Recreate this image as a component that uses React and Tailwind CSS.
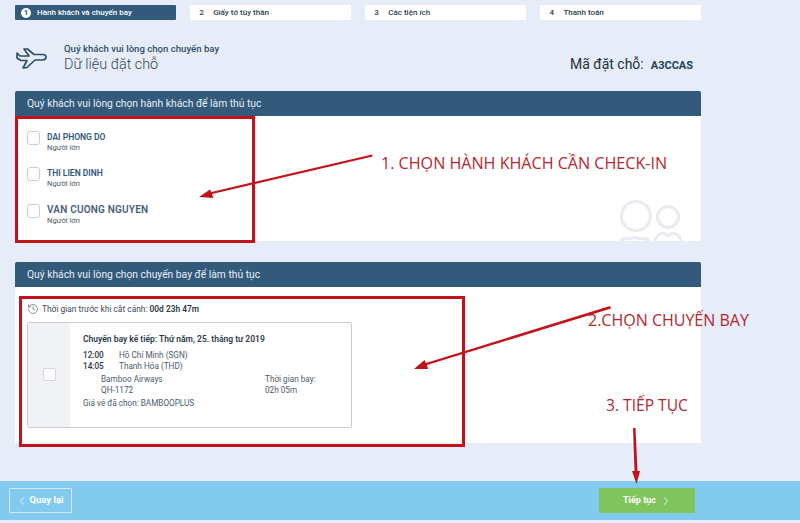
import React from "react";
import { ChevronLeft, ChevronRight, History } from "lucide-react";

function Step({ n, label, active }) {
  return (
    <div className={`flex-1 h-[15px] flex items-center rounded-[1px] pl-[6px] pt-[1px] text-[8px] font-medium ${active ? "bg-[#33597b] text-white" : "bg-white text-[#2d3f50]"}`}>
      {active ? (
        <span className="w-[10px] h-[10px] rounded-full bg-white text-[#33597b] flex items-center justify-center text-[8px] font-bold mr-[6px]">{n}</span>
      ) : (
        <span className="w-[5px] ml-[3px] mr-[9px]">{n}</span>
      )}
      <span>{label}</span>
    </div>
  );
}

function PanelHead({ children }) {
  return (
    <div className="h-[25px] bg-[#33597b] rounded-t-[2px] flex items-center pl-[12px] text-[10.3px] text-[#e8eff5]">
      {children}
    </div>
  );
}

function Passenger({ name, large, tight }) {
  return (
    <div className={`flex items-start ${tight ? "h-[36px]" : "h-[37px]"}`}>
      <span className="w-[13px] h-[14px] mt-[1px] bg-white border border-[#c9ced4] rounded-[3px] shrink-0" />
      <div className="ml-[7px] pt-[1px]">
        <div className={`leading-[12px] font-semibold ${large ? "text-[10px] text-[#4a5d78] tracking-[0.2px]" : "text-[8.5px] text-[#2f5779]"}`}>{name}</div>
        <div className="text-[7.6px] leading-[9px] text-[#4f5a65]">Người lớn</div>
      </div>
    </div>
  );
}

export default function App() {
  return (
    <div className="relative w-[800px] h-[523px] overflow-hidden bg-[#e6edf8] flex flex-col text-[#33475a] font-['Roboto','Noto_Sans',sans-serif]">
      <div className="w-[686px] ml-[15px] flex flex-col">
        <div className="flex gap-[14.5px] mt-[5px]">
          <Step n="1" label="Hành khách và chuyến bay" active />
          <Step n="2" label="Giấy tờ tùy thân" />
          <Step n="3" label="Các tiện ích" />
          <Step n="4" label="Thanh toán" />
        </div>

        <div className="h-[71px] flex items-center">
          <svg viewBox="0 0 32 24" className="w-[32px] h-[24px] mt-[4px] text-[#2d4f6c]" fill="none" stroke="currentColor" strokeWidth="1.7" strokeLinejoin="round">
            <path d="M2 7 L5 10 H14 L9 3 H12.5 L19 8.5 H28 C30.5 8.5 31 10 31 11 C31 13 29.5 14 27 14 H20 L12 21.5 L8 22 L12 14.5 H6 L2 12 Z" />
          </svg>
          <div className="ml-[17px] flex-1 pt-[5px]">
            <div className="text-[9.6px] leading-[12px] font-medium text-[#2f4d68]">Quý khách vui lòng chọn chuyến bay</div>
            <div className="text-[14.4px] leading-[19px] font-light text-[#33475a]">Dữ liệu đặt chỗ</div>
          </div>
          <div className="flex items-baseline mt-[18px] mr-[8px]">
            <span className="text-[14px] text-[#23303c]">Mã đặt chỗ:</span>
            <span className="ml-[7px] text-[11px] font-bold text-[#1e3f5f]">A3CCAS</span>
          </div>
        </div>

        <div>
          <PanelHead>Quý khách vui lòng chọn hành khách để làm thủ tục</PanelHead>
          <div className="relative h-[125px] bg-white pl-[12px] pt-[14px] overflow-hidden">
            <Passenger name="DAI PHONG DO" tight />
            <Passenger name="THI LIEN DINH" />
            <Passenger name="VAN CUONG NGUYEN" large />
            <svg viewBox="0 0 70 42" className="absolute right-[14px] bottom-0 w-[70px] h-[42px] text-[#e9ebf0]" fill="none" stroke="currentColor" strokeWidth="3">
              <circle cx="19" cy="17" r="14.5" />
              <circle cx="51" cy="18" r="10.5" />
              <path d="M3 43 C5 39 9 39 13 40 C16 38 19 38 22 40 C26 39 30 39 33 43" />
              <path d="M38 43 C39 36 44 33 48 35 C50 37 52 37 54 35 C59 33 63 37 64 43" />
            </svg>
          </div>
        </div>

        <div className="mt-[21px]">
          <PanelHead>Quý khách vui lòng chọn chuyến bay để làm thủ tục</PanelHead>
          <div className="h-[156px] bg-white pl-[12px] pt-[16px]">
            <div className="flex items-center text-[8.4px] leading-[12px] text-[#3b4a58]">
              <History size={12} strokeWidth={1.2} className="mr-[3px] text-[#44525f]" />
              <span>Thời gian trước khi cắt cánh:&nbsp;</span>
              <span className="font-semibold text-[#2b3a48]">00d 23h 47m</span>
            </div>
            <div className="mt-[7px] w-[325px] h-[106px] flex bg-white border border-[#c8ccd1] rounded-[2px]">
              <div className="w-[42px] bg-[#f1f3f6] flex items-center justify-center">
                <span className="w-[13px] h-[13px] mb-[2px] bg-white border border-[#d3d7dc] rounded-[2px]" />
              </div>
              <div className="flex-1 pl-[13px] pt-[10px] text-[8.2px] leading-[10.5px] text-[#4a5b6b]">
                <div className="font-semibold text-[8.5px] text-[#2b3a48] h-[16px] leading-[12px]">Chuyến bay kế tiếp: Thứ năm, 25. tháng tư 2019</div>
                <div className="flex mt-[1px]"><span className="w-[36px] font-medium text-[#2b3a48]">12:00</span><span>Hồ Chí Minh (SGN)</span></div>
                <div className="flex"><span className="w-[36px] font-medium text-[#2b3a48]">14:05</span><span>Thanh Hóa (THD)</span></div>
                <div className="flex mt-[3px] ml-[18px]">
                  <div className="w-[164px]">
                    <div>Bamboo Airways</div>
                    <div>QH-1172</div>
                  </div>
                  <div>
                    <div>Thời gian bay:</div>
                    <div>02h 05m</div>
                  </div>
                </div>
                <div className="mt-[3px]">Giá vé đã chọn: BAMBOOPLUS</div>
              </div>
            </div>
          </div>
        </div>
      </div>

      <div className="mt-auto mb-[3px] h-[39px] bg-[#82cbee] flex items-center justify-between pl-[9px] pr-[105px]">
        <button className="w-[63px] h-[25px] border border-[#cfeaf8] rounded-[1px] flex items-center justify-center pr-[2px] text-[9.5px] font-bold text-white">
          <ChevronLeft size={14} strokeWidth={1.3} />
          <span>Quay lại</span>
        </button>
        <button className="w-[96px] h-[25px] rounded-[1px] bg-[#80c45e] flex items-center justify-center pl-[2px] text-[9px] font-bold text-white">
          <span>Tiếp tục</span>
          <ChevronRight size={14} strokeWidth={1.3} className="ml-[3px]" />
        </button>
      </div>

      {/* Hand-drawn annotations lying over the page */}
      <div className="absolute left-[15px] top-[116px] w-[240px] h-[127px] border-[3px] border-[#c4121b]" />
      <div className="absolute left-[19px] top-[296px] w-[446px] h-[151px] border-[3px] border-[#c4121b]" />
      <svg viewBox="0 0 800 523" className="absolute inset-0 w-[800px] h-[523px] pointer-events-none" fill="#c4121b" stroke="none">
        <path d="M372 154.5 L372.6 156.5 L212 194 L213.5 198 L199 197 L210 189.5 L211.5 192 Z" />
        <path d="M610 306 L611 308.5 L427 365 L428 369 L414 369 L424.5 360 L426 363 Z" />
        <path d="M633 428 L635.5 428 L637.5 471 L640 471 L636.5 484 L632 471 L634.5 471 Z" />
      </svg>
      <div className="absolute left-[381px] top-[152px] text-[16.1px] leading-[22px] text-[#b5272c] font-['Open_Sans',sans-serif] whitespace-nowrap">1. CHỌN HÀNH KHÁCH CẦN CHECK-IN</div>
      <div className="absolute left-[588px] top-[309px] text-[16px] leading-[22px] text-[#b5272c] font-['Open_Sans',sans-serif] whitespace-nowrap">2.CHỌN CHUYẾN BAY</div>
      <div className="absolute left-[606px] top-[394px] text-[15.6px] leading-[22px] text-[#b5272c] font-['Open_Sans',sans-serif] whitespace-nowrap">3. TIẾP TỤC</div>
    </div>
  );
}
